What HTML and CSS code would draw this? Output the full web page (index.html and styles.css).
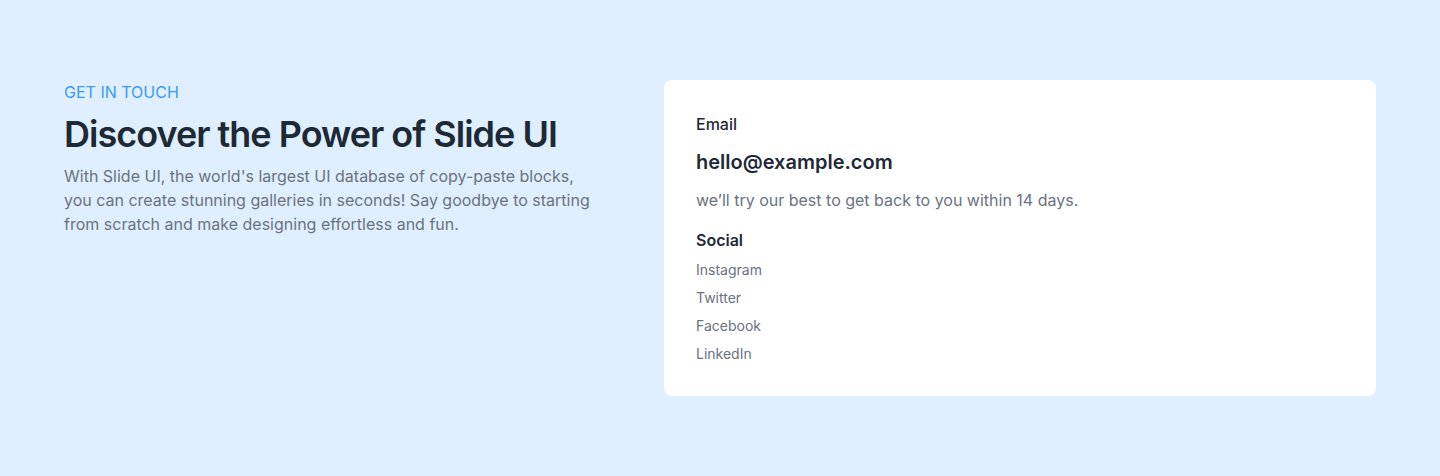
FILE: index.html
```html
<!DOCTYPE html>
<html lang="en">
<head>
<meta charset="utf-8">
<title>Contact</title>
<link rel="stylesheet" href="styles.css">
</head>
<body>
<section class="contact">
  <div class="intro">
    <p class="eyebrow">GET IN TOUCH</p>
    <h1 class="title">Discover the Power of Slide UI</h1>
    <p class="lead">With Slide UI, the world's largest UI database of copy-paste blocks, you can create stunning galleries in seconds! Say goodbye to starting from scratch and make designing effortless and fun.</p>
  </div>
  <div class="card">
    <p class="label">Email</p>
    <p class="email">hello@example.com</p>
    <p class="note">we’ll try our best to get back to you within 14 days.</p>
    <p class="social-title">Social</p>
    <ul class="social">
      <li>Instagram</li>
      <li>Twitter</li>
      <li>Facebook</li>
      <li>LinkedIn</li>
    </ul>
  </div>
</section>
</body>
</html>
```

FILE: styles.css
```css
* { box-sizing: border-box; }
html, body { margin: 0; padding: 0; }
body {
  background: #dfefff;
  font-family: Inter, "Noto Sans", sans-serif;
  color: #1f2937;
  height: 476px;
}
p, h1, ul { margin: 0; padding: 0; }
.contact {
  display: grid;
  grid-template-columns: 536px 712px;
  gap: 64px;
  padding: 80px 64px;
  align-items: start;
}
.intro { display: flex; flex-direction: column; }
.eyebrow {
  font-size: 16px;
  line-height: 24px;
  color: #3b9bf0;
}
.title {
  margin-top: 10px;
  font-size: 36px;
  line-height: 40px;
  font-weight: 600;
  letter-spacing: -1px;
  color: #1e2936;
}
.lead {
  margin-top: 10px;
  font-size: 16px;
  line-height: 24px;
  color: #6b7280;
}
.card {
  background: #ffffff;
  border-radius: 8px;
  padding: 32px;
  display: flex;
  flex-direction: column;
}
.label {
  font-size: 16px;
  line-height: 24px;
  font-weight: 500;
  color: #1f2937;
}
.email {
  margin-top: 12px;
  font-size: 20px;
  line-height: 28px;
  font-weight: 600;
  color: #1f2937;
}
.note {
  margin-top: 12px;
  font-size: 16px;
  line-height: 24px;
  color: #6b7280;
}
.social-title {
  margin-top: 16px;
  font-size: 16px;
  line-height: 24px;
  font-weight: 600;
  color: #1f2937;
}
.social {
  list-style: none;
  margin-top: 8px;
  display: flex;
  flex-direction: column;
  gap: 8px;
}
.social li {
  font-size: 14px;
  line-height: 20px;
  color: #6b7280;
}
```
